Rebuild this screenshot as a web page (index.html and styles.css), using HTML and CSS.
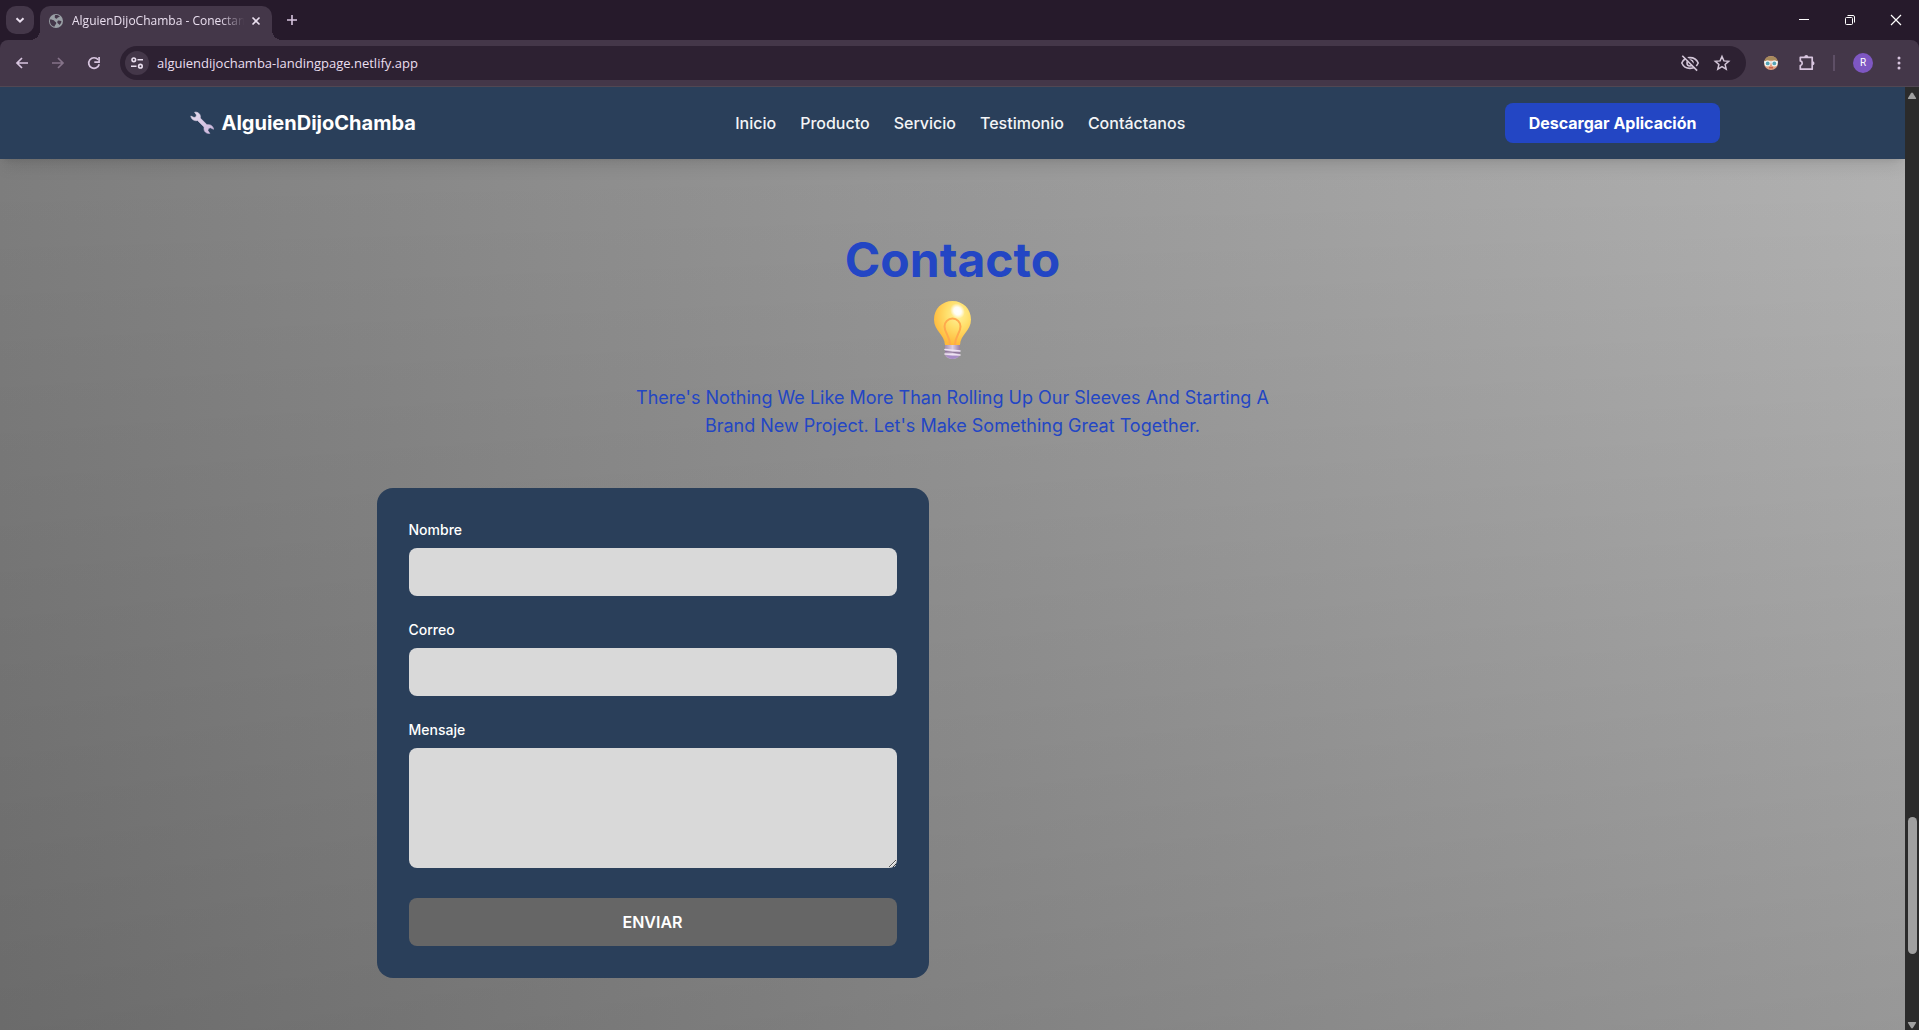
FILE: index.html
```
<!DOCTYPE html>
<html lang="es">
<head>
<meta charset="utf-8">
<meta name="viewport" content="width=device-width, initial-scale=1">
<title>AlguienDijoChamba - Conectan</title>
<link rel="stylesheet" href="styles.css">
</head>
<body>
<div class="browser">
  <div class="tabstrip">
    <button class="tab-search" aria-label="Buscar pestañas"><svg width="16" height="16" viewBox="0 0 16 16"><path d="M4.500 6.200 8 9.700l3.500-3.500" fill="none" stroke="currentColor" stroke-width="2"/></svg></button>
    <div class="tab">
      <svg class="favicon" width="16" height="16" viewBox="0 0 16 16"><circle cx="8" cy="8" r="7" fill="#9aa0a6"/><path d="M2 6.500c2 0 4 .5 4.500 1.500.4 1 2 .8 1.800 2.200-.2 1.400-1.600 1.300-1.600 3.300C4 13.500 1.500 11 2 6.500zM7 2.300c2-.6 3.600.2 4.800 1.200-.8 1-2 .6-2.400 1.600-.5 1.200-2.200.4-2.600-.6-.2-.8.200-1.400.2-2.200zM9.500 8c1.200-1 2.500-.4 4 .200-.3 1.800-1 3-2.300 3.800-.4-1.600-1.500-1.200-1.900-2.200z" fill="#443749"/></svg>
      <span class="tab-title">AlguienDijoChamba - Conectan</span>
      <button class="tab-close" aria-label="Cerrar pestaña"><svg width="16" height="16" viewBox="0 0 16 16"><path d="m4.500 4.500 7 7m0-7-7 7" fill="none" stroke="currentColor" stroke-width="1.600"/></svg></button>
    </div>
    <button class="new-tab" aria-label="Nueva pestaña"><svg width="16" height="16" viewBox="0 0 16 16"><path d="M8 3v10M3 8h10" fill="none" stroke="currentColor" stroke-width="1.600"/></svg></button>
    <div class="window-controls">
      <button aria-label="Minimizar"><svg width="12" height="12" viewBox="0 0 12 12"><path d="M1 5.500h10" stroke="currentColor"/></svg></button>
      <button aria-label="Restaurar"><svg width="12" height="12" viewBox="0 0 12 12"><path d="M3.500 1.500H9a1.500 1.500 0 0 1 1.500 1.500v5.500" fill="none" stroke="currentColor"/><rect x="1.500" y="3.500" width="7" height="7" rx="1" fill="none" stroke="currentColor"/></svg></button>
      <button aria-label="Cerrar"><svg width="12" height="12" viewBox="0 0 12 12"><path d="m1 1 10 10M11 1 1 11" stroke="currentColor" stroke-width="1.200"/></svg></button>
    </div>
  </div>
  <div class="toolbar">
    <div class="nav-buttons">
      <button aria-label="Atrás"><svg width="16" height="16" viewBox="0 0 16 16"><path d="M14 8H3m5-5L3 8l5 5" fill="none" stroke="currentColor" stroke-width="1.700"/></svg></button>
      <button class="dim" aria-label="Adelante"><svg width="16" height="16" viewBox="0 0 16 16"><path d="M2 8h11M8 3l5 5-5 5" fill="none" stroke="currentColor" stroke-width="1.700"/></svg></button>
      <button aria-label="Recargar"><svg width="16" height="16" viewBox="0 0 16 16"><path d="M13.200 9.200A5.300 5.300 0 1 1 12.200 4.800" fill="none" stroke="currentColor" stroke-width="1.700"/><path d="M13.100 2v5.200H8.300" fill="none" stroke="currentColor" stroke-width="1.700"/></svg></button>
    </div>
    <div class="omnibox">
      <button class="site-info" aria-label="Información del sitio"><svg width="14" height="14" viewBox="0 0 14 14"><g fill="none" stroke="currentColor" stroke-width="1.600"><circle cx="3.800" cy="3.800" r="1.800"/><path d="M7.500 3.800H13M1 10.200h5.500"/><circle cx="10.400" cy="10.200" r="1.800"/></g></svg></button>
      <input class="url" type="text" aria-label="Dirección" value="alguiendijochamba-landingpage.netlify.app">
      <button class="omni-action" aria-label="Cookies bloqueadas"><svg width="20" height="20" viewBox="0 0 20 20"><g fill="none" stroke="currentColor" stroke-width="1.600"><path d="M1.800 10C3.300 6.500 6.300 4.600 10 4.600s6.700 1.900 8.200 5.400c-1.500 3.500-4.500 5.400-8.200 5.400S3.300 13.500 1.800 10z"/><circle cx="10" cy="10" r="3"/></g><path d="m3.500 1.800 14.500 14.500" stroke="#2d2132" stroke-width="2"/><path d="m2.300 2.800 14.800 14.800" stroke="currentColor" stroke-width="1.600"/></svg></button>
      <button class="omni-action" aria-label="Añadir a marcadores"><svg width="18" height="18" viewBox="0 0 18 18"><path d="m9 2.500 1.900 4.400 4.800.4-3.600 3.200 1.100 4.700L9 12.700l-4.200 2.500 1.100-4.700-3.600-3.200 4.800-.4z" fill="none" stroke="currentColor" stroke-width="1.500"/></svg></button>
    </div>
    <div class="extensions">
      <button aria-label="Extensión"><svg width="16" height="16" viewBox="0 0 16 16"><circle cx="8" cy="8" r="7" fill="#e0a080"/><path d="M1.200 6.500a7 7 0 0 1 13.600 0l-2.600-1.300H4z" fill="#a68a5c"/><path d="M1 6.200h14v1.600H1z" fill="#e8eef0"/><circle cx="4.500" cy="8.400" r="3" fill="#f3f7f8"/><circle cx="11.500" cy="8.400" r="3" fill="#f3f7f8"/><circle cx="4.700" cy="8.400" r="1.900" fill="#55a3b5"/><circle cx="11.300" cy="8.400" r="1.900" fill="#55a3b5"/><path d="M6 12.800h4" stroke="#c4513f" stroke-width="1.200"/></svg></button>
      <button aria-label="Extensiones"><svg width="20" height="20" viewBox="0 0 20 20"><path d="M3.300 4.300H15.200V16.200H3.300V12.600a2.400 2.400 0 0 0 0-4.700z" fill="none" stroke="currentColor" stroke-width="1.700" stroke-linejoin="round"/><path d="M7.300 4a2 2 0 0 1 4 0zM15.500 8.200a2 2 0 0 1 0 4z" fill="currentColor"/></svg></button>
      <span class="divider"></span>
      <button class="avatar">R</button>
      <button class="menu" aria-label="Menú"><svg width="16" height="16" viewBox="0 0 16 16"><g fill="currentColor"><circle cx="8" cy="3" r="1.500"/><circle cx="8" cy="8" r="1.500"/><circle cx="8" cy="13" r="1.500"/></g></svg></button>
    </div>
  </div>
  <div class="viewport">
    <div class="page">
      <header class="site-header">
        <div class="header-inner">
          <a class="brand" href="#"><svg width="24" height="24" viewBox="0 0 24 24"><defs><linearGradient id="steel" x1="0" y1="0" x2="1" y2="1"><stop offset="0" stop-color="#e5dcec"/><stop offset="1" stop-color="#cdb6dd"/></linearGradient></defs><path d="M4.600 1.200c3.200-.5 6 1.600 5.800 5l-.1.900 6.700 6.700c3-.7 6.200 1 6.600 4.500l-3.100-1.500-2 .6-.6 2.200 1.900 2.800c-3.200.5-6-1.700-5.800-5.100l.1-1.200-6.600-6.600C4.500 10.300 1.300 8.500.8 5l3.300 1.500 1.800-.6.600-1.900z" fill="url(#steel)" stroke="url(#steel)" stroke-width=".6" stroke-linejoin="round"/></svg>AlguienDijoChamba</a>
          <nav class="site-nav">
            <a href="#inicio">Inicio</a>
            <a href="#producto">Producto</a>
            <a href="#servicio">Servicio</a>
            <a href="#testimonio">Testimonio</a>
            <a href="#contacto">Contáctanos</a>
          </nav>
          <button class="download">Descargar Aplicación</button>
        </div>
      </header>
      <main class="contact" id="contacto">
        <h1>Contacto</h1>
        <svg class="bulb" width="60" height="60" viewBox="0 0 60 60"><defs><radialGradient id="glass" cx=".65" cy=".3" r=".7"><stop offset="0" stop-color="#fff3a0"/><stop offset=".45" stop-color="#ffdf6b"/><stop offset="1" stop-color="#ffb93b"/></radialGradient><radialGradient id="shine"><stop offset="0" stop-color="#fff"/><stop offset=".5" stop-color="#fff" stop-opacity=".9"/><stop offset="1" stop-color="#fff" stop-opacity="0"/></radialGradient><linearGradient id="cap" x1="0" x2="1"><stop offset="0" stop-color="#a58fb0"/><stop offset=".5" stop-color="#dccde2"/><stop offset="1" stop-color="#9a80aa"/></linearGradient></defs><path d="M22 44h15v11.500c-2 4.600-13 4.600-15 0z" fill="url(#cap)"/><path d="M23.500 55.500h12c-2 4.600-10 4.600-12 0z" fill="#a78bc7"/><path d="m22 49.500 15 1.500M22 54l15 1" stroke="#eee3f2" stroke-width="1.600" stroke-linecap="round"/><path d="m22 51.500 15 1.500" stroke="#8d7599" stroke-width="1"/><path d="M29.500 1C40.300 1 48 9.200 48 19.400 48 31 37.500 34 37 45H22C21.500 34 11 31 11 19.400 11 9.200 18.700 1 29.500 1z" fill="url(#glass)"/><path d="M27 45c0-9-5.500-12-5.500-18.500a8 8 0 0 1 16 0C37.500 33 32 36 32 45" fill="none" stroke="#ffa94d" stroke-width="2"/><ellipse cx="34.500" cy="11" rx="7" ry="8" transform="rotate(-40 34.500 11)" fill="url(#shine)"/></svg>
        <p class="lead">There's Nothing We Like More Than Rolling Up Our Sleeves And Starting A Brand New Project. Let's Make Something Great Together.</p>
        <div class="contact-grid">
          <form class="card">
            <div class="field"><label for="nombre">Nombre</label><input id="nombre" type="text"></div>
            <div class="field"><label for="correo">Correo</label><input id="correo" type="email"></div>
            <div class="field message"><label for="mensaje">Mensaje</label><textarea id="mensaje"></textarea></div>
            <button class="send" type="submit">ENVIAR</button>
          </form>
        </div>
      </main>
    </div>
    <div class="scrollbar" aria-hidden="true">
      <svg width="10" height="8" viewBox="0 0 10 8"><path d="M4 1.200Q5 0 6 1.200L9 6q.5 1-.5 1h-7Q.5 7 1 6z" fill="#a0a0a0"/></svg>
      <div class="track"><div class="thumb"></div></div>
      <svg width="10" height="8" viewBox="0 0 10 8"><path d="M4 6.800Q5 8 6 6.800L9 2q.5-1-.5-1h-7Q.5 1 1 2z" fill="#a0a0a0"/></svg>
    </div>
  </div>
</div>
</body>
</html>
```
FILE: styles.css
```
* { box-sizing: border-box; }
html, body { height: 100%; }
body { margin: 0; font-family: Inter, sans-serif; background: #261a2b; overflow: hidden; }
button { border: 0; background: none; padding: 0; color: inherit; font: inherit; cursor: pointer; }
button svg { display: block; }
a { color: inherit; text-decoration: none; }

.browser { display: flex; flex-direction: column; height: 100vh; color: #d8c5df; }

/* tab strip */
.tabstrip { display: flex; height: 40px; background: #261a2b; padding-left: 6px; }
.tab-search { width: 28px; height: 28px; margin-top: 6px; border-radius: 10px; background: #443749; color: #eadfef; display: grid; place-items: center; }
.tab { position: relative; display: flex; align-items: center; width: 232px; height: 34px; margin: 6px 0 0 6px; padding: 0 8px 4px; border-radius: 10px 10px 0 0; background: #443749; color: #eadfef; }
.tab::before, .tab::after { content: ""; position: absolute; bottom: 0; width: 10px; height: 10px; }
.tab::before { left: -10px; background: radial-gradient(circle at 0 0, transparent 10px, #443749 10px); }
.tab::after { right: -10px; background: radial-gradient(circle at 100% 0, transparent 10px, #443749 10px); }
.favicon { flex: none; }
.tab-title { flex: 1; margin-left: 8px; overflow: hidden; white-space: nowrap; font: 12px/16px "Open Sans", sans-serif; -webkit-mask-image: linear-gradient(to right, #000 84%, transparent 98%); mask-image: linear-gradient(to right, #000 84%, transparent 98%); }
.new-tab { width: 28px; height: 28px; margin: 6px 0 0 6px; display: grid; place-items: center; }
.window-controls { display: flex; margin-left: auto; color: #fff; }
.window-controls button { width: 46px; display: grid; place-items: center; }

/* toolbar */
.toolbar { display: flex; align-items: center; height: 47px; padding: 0 4px 0 5px; background: #443749; border-bottom: 1px solid #514753; border-radius: 8px 8px 0 0; }
.nav-buttons { display: flex; gap: 2px; }
.nav-buttons button { width: 34px; height: 34px; display: grid; place-items: center; }
.nav-buttons .dim { color: #857389; }
.omnibox { flex: 1; display: flex; align-items: center; height: 34px; margin-left: 9px; padding: 0 8px 0 5px; border-radius: 17px; background: #2d2132; color: #d3c6d8; }
.site-info { width: 24px; height: 24px; border-radius: 50%; background: #443749; color: #eadfef; display: grid; place-items: center; }
.url { flex: 1; margin: 0 8px; padding: 0; border: 0; background: none; color: #eadfef; font: 13px/18px "Open Sans", sans-serif; }
.omni-action { width: 32px; height: 32px; display: grid; place-items: center; }
.extensions { display: flex; align-items: center; padding-left: 7px; }
.extensions button { width: 36px; height: 34px; display: grid; place-items: center; }
.divider { width: 2px; height: 16px; margin: 0 8px; background: #5e4f66; }
.extensions .avatar { width: 20px; height: 20px; margin: 0 10px; border-radius: 50%; background: #7e57c2; color: #fff; font: 10px/20px Roboto, sans-serif; }
.extensions .menu { width: 32px; }

/* page */
.viewport { flex: 1; display: flex; min-height: 0; }
.page { flex: 1; overflow: hidden; background: linear-gradient(to bottom, rgba(0, 0, 0, 0), rgba(0, 0, 0, .16)), linear-gradient(to right, #7f7f7f, #b4b4b4); }
.site-header { position: relative; background: #2a3f5a; color: #fff; box-shadow: 0 10px 15px -3px rgba(0, 0, 0, .1), 0 4px 6px -4px rgba(0, 0, 0, .1); }
.header-inner { display: flex; justify-content: space-between; align-items: center; max-width: 1536px; height: 72px; margin: 0 auto; }
.brand { display: flex; align-items: center; gap: 8px; padding-left: 5px; font-size: 20px; line-height: 28px; font-weight: 700; }
.site-nav { display: flex; gap: 24px; font-size: 16px; line-height: 24px; font-weight: 500; color: #f3f4f6; }
.download { height: 40px; padding: 0 24px; border-radius: 8px; background: #2346c4; font-size: 16px; line-height: 24px; font-weight: 700; }
.contact { display: flex; flex-direction: column; align-items: center; padding: 77px 32px 48px; }
.contact h1 { margin: 0; font-size: 48px; line-height: 48px; font-weight: 700; color: #2346c4; }
.bulb { margin-top: 16px; }
.lead { max-width: 672px; margin: 24px 0 48px; text-align: center; font-size: 18px; line-height: 28px; color: #2346c4; }
.contact-grid { display: grid; grid-template-columns: 1fr 1fr; gap: 48px; width: 100%; max-width: 1152px; }
.card { padding: 32px; border-radius: 16px; background: #2a3f5a; color: #fff; }
.field { display: flex; flex-direction: column; gap: 8px; margin-bottom: 24px; }
.field.message { margin-bottom: 30px; }
.field label { font-size: 14px; line-height: 20px; font-weight: 500; }
.field input, .field textarea { width: 100%; padding: 12px; border: 0; border-radius: 8px; background: #d9d9d9; font: 16px/24px Inter, sans-serif; }
.field textarea { height: 120px; resize: vertical; }
.send { width: 100%; height: 48px; border-radius: 8px; background: #666; font-size: 16px; line-height: 24px; font-weight: 600; }

/* scrollbar */
.scrollbar { display: flex; flex-direction: column; align-items: center; width: 14px; padding: 5px 0 1px; background: #2b2b2b; }
.track { flex: 1; display: flex; flex-direction: column; justify-content: flex-end; padding-bottom: 67px; }
.thumb { width: 9px; height: 16%; border-radius: 5px; background: #a0a0a0; }
```
